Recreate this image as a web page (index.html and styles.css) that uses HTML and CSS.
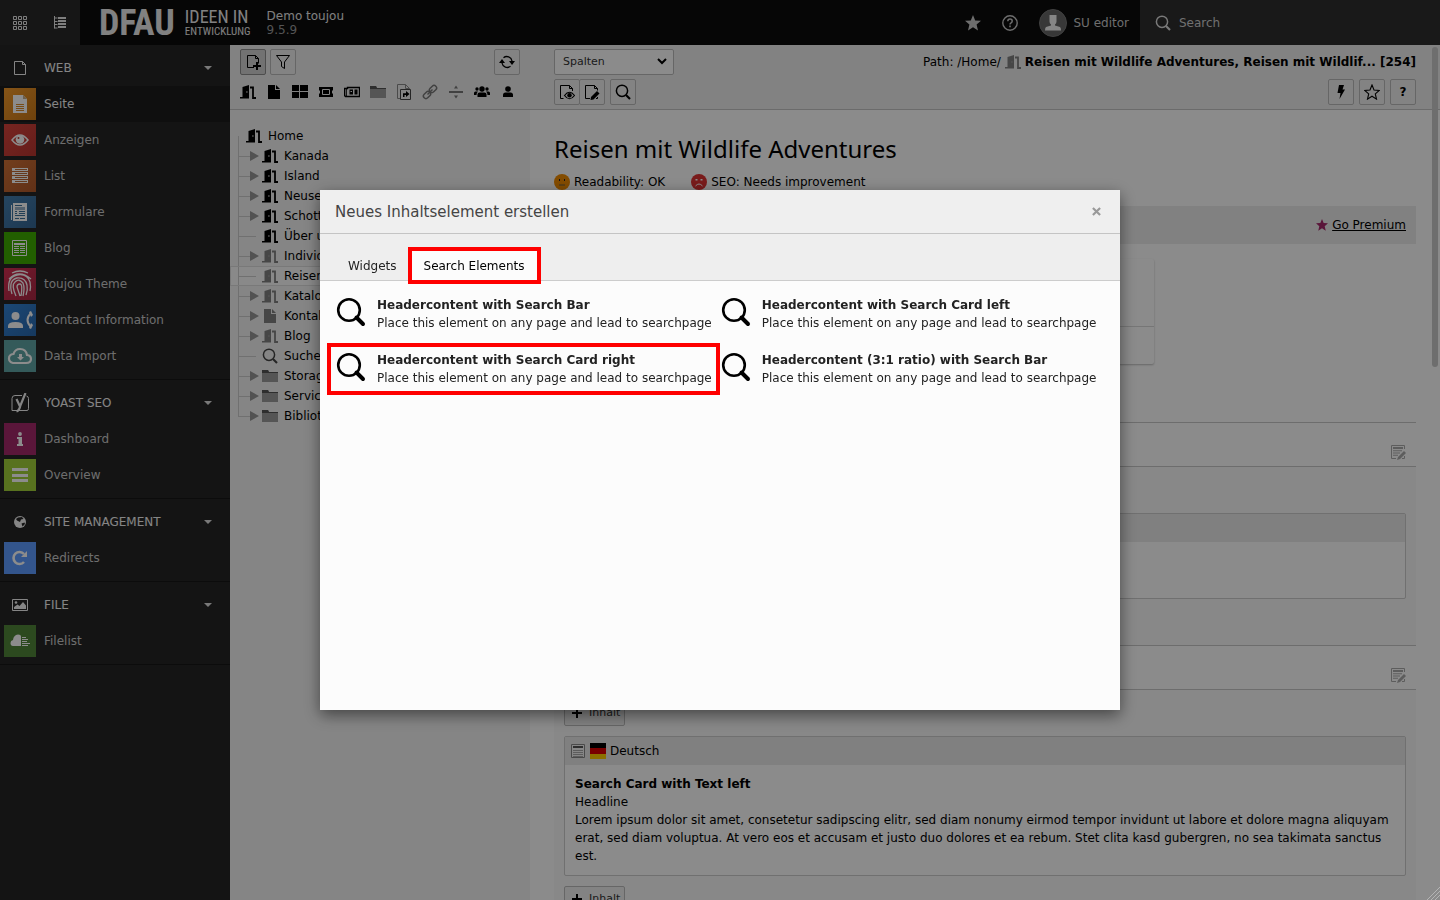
FILE: index.html
```html
<!DOCTYPE html>
<html lang="de">
<head>
    <meta charset="UTF-8">
    <title>Demo toujou</title>
    <link rel="stylesheet" href="styles.css">
</head>
<body>
<svg class="sprite" aria-hidden="true">
    <symbol id="i-door" viewBox="0 0 16 16"><path d="M2.500 3L9 1v13.500H0V13h2.500z"/><path d="M10 3.500h3V14h3" fill="none" stroke="currentColor" stroke-width="1.800"/><path d="M6.300 7h1.200v2H6.300z" fill="#999"/></symbol>
    <symbol id="i-page" viewBox="0 0 16 16"><path d="M2 1h7v5h5v9H2z"/><path d="M10 1l4 4h-4z"/></symbol>
    <symbol id="i-page-o" viewBox="0 0 16 16"><path d="M2.500 1.500h8l3 3v10h-11zM10.500 1.500v3h3" fill="none" stroke="currentColor"/></symbol>
    <symbol id="i-page-new" viewBox="0 0 16 16"><path d="M9 13.500H2.500v-12h8l3 3v5M10.500 1.500v3h3" fill="none" stroke="currentColor"/><path d="M11 8h2v3h3v2h-3v3h-2v-3H8v-2h3z"/></symbol>
    <symbol id="i-filter" viewBox="0 0 16 16"><path d="M1.500 1.500h13L9.500 8v6.500l-3-2V8z" fill="none" stroke="currentColor"/></symbol>
    <symbol id="i-refresh" viewBox="0 0 16 16"><path d="M3 9a5.300 5.300 0 0 0 8.500 3.300M13 7a5.300 5.300 0 0 0-8.500-3.300" fill="none" stroke="currentColor" stroke-width="1.300"/><path d="M0 9l3-4 3 4zM10 7h6l-3 4z"/></symbol>
    <symbol id="i-blocks" viewBox="0 0 16 16"><path d="M0 1h7v6H0zM8 1h8v6H8zM0 8h7v6H0zM8 8h8v6H8z"/></symbol>
    <symbol id="i-ticket" viewBox="0 0 16 16"><path d="M1 3h14v3l-1 1v2l1 1v3H1v-3l1-1V7L1 6z"/><path d="M4.500 5.500h7v5h-7z" fill="none" stroke="#eee"/></symbol>
    <symbol id="i-news" viewBox="0 0 16 16"><path d="M3.500 3.500h12v9H1.500l-1-1v-7h3z" fill="none" stroke="currentColor" stroke-width="1.400"/><path d="M5.500 5.500h3.500v5H5.500zM10.500 5.500h3v5h-3zM1.800 4h1v8h-1z"/><path d="M6.500 7h1.500v1H6.500z" fill="#eee"/></symbol>
    <symbol id="i-folder" viewBox="0 0 16 16"><path d="M0 2h6l1 2h9v10H0z" fill="#9c9c9c"/><path d="M0 2h6l1 2h9v1H0z" fill="#555"/></symbol>
    <symbol id="i-link-page" viewBox="0 0 16 16"><path d="M4 14.500H1.500V.5h8l4 4v1M9.500.5v4h4" fill="none" stroke="#888"/><path d="M4.500 5.500h10v10h-10z" fill="#eee" stroke="#444"/><path d="M10 7l3.500 3-3.500 3v-2H8.500v2H7V9.200h3z"/></symbol>
    <symbol id="i-chain" viewBox="0 0 16 16"><g fill="none" stroke="#777" stroke-width="1.500"><rect x="7" y="2.500" width="8" height="5" rx="2.500" transform="rotate(-45 11 5)"/><rect x="1" y="8.500" width="8" height="5" rx="2.500" transform="rotate(-45 5 11)"/><path d="M5.500 10.500l5-5"/></g></symbol>
    <symbol id="i-divider" viewBox="0 0 16 16"><path d="M1 7h14v2H1zM6 4.500l2-3 2 3zM6 11.500h4l-2 3z" fill="#777"/></symbol>
    <symbol id="i-users" viewBox="0 0 16 16"><circle cx="8" cy="5" r="2.700"/><path d="M3.500 13V10.500q0-2 2-2h5q2 0 2 2V13z"/><circle cx="3" cy="5" r="1.700"/><circle cx="13" cy="5" r="1.700"/><path d="M0 11V9q0-1.500 1.500-1.500H4q-1.500 1-1.500 3.500zM16 11V9q0-1.500-1.500-1.500H12q1.500 1 1.500 3.500z"/></symbol>
    <symbol id="i-user" viewBox="0 0 16 16"><circle cx="8" cy="5" r="2.800"/><path d="M3 13v-2q0-2.500 2.500-2.500h5Q13 8.500 13 11v2z"/></symbol>
    <symbol id="i-search" viewBox="0 0 16 16"><circle cx="7" cy="6.800" r="5.600" fill="none" stroke="currentColor" stroke-width="1.500"/><path d="M11 11l4 4" fill="none" stroke="currentColor" stroke-width="2.200"/></symbol>
    <symbol id="i-search-big" viewBox="0 0 32 32"><circle cx="14" cy="14" r="10.800" fill="none" stroke="currentColor" stroke-width="2.600"/><path d="M21.500 21.500L28 28" fill="none" stroke="currentColor" stroke-width="4" stroke-linecap="round"/></symbol>
    <symbol id="i-page-view" viewBox="0 0 16 16"><path d="M4.500 14.500h-3V1.500h9l3 3v2.500M10.500 1.500v3h3" fill="none" stroke="currentColor"/><path d="M5.500 11.500q5-6.500 10 0-5 6.500-10 0z" fill="none" stroke="currentColor" stroke-width="1.200"/><circle cx="10.500" cy="11.300" r="2.200"/></symbol>
    <symbol id="i-page-edit" viewBox="0 0 16 16"><path d="M6 14.500H1.500V1.500h9l3 3v2M10.500 1.500v3h3M12 14.500h1.500V13" fill="none" stroke="currentColor"/><path d="M13 7l2.500 2.500-6 6L6.500 16l.5-3z"/></symbol>
    <symbol id="i-bolt" viewBox="0 0 16 16"><path d="M6 1h5L9.500 5.500H12L6.500 15l1-6H4.500z"/></symbol>
    <symbol id="i-star" viewBox="0 0 16 16"><path d="M8 0l2.200 5.400 5.800.4-4.400 3.800L13 15.500 8 12.300l-5 3.200 1.400-5.900L0 5.800l5.800-.4z"/></symbol>
    <symbol id="i-star-o" viewBox="0 0 16 16"><path d="M8 1l2 5 5.300.4-4 3.500 1.200 5.200L8 12.200l-4.500 2.900 1.200-5.200-4-3.500L6 6z" fill="none" stroke="currentColor" stroke-width="1.100"/></symbol>
    <symbol id="i-grid" viewBox="0 0 16 16"><path d="M1.500 1.500h3v3h-3zm5 0h3v3h-3zm5 0h3v3h-3zm-10 5h3v3h-3zm5 0h3v3h-3zm5 0h3v3h-3zm-10 5h3v3h-3zm5 0h3v3h-3zm5 0h3v3h-3z" fill="none" stroke="currentColor"/></symbol>
    <symbol id="i-list-tree" viewBox="0 0 16 16"><path d="M2.500 1v12.500M2.500 3h3M2.500 6.500h3M2.500 9.500h3M2.500 13h3" fill="none" stroke="currentColor"/><path d="M6 2h8v2H6zM6 5h8v2H6zM6 8h8v2H6zM6 11h8v2H6z"/></symbol>
    <symbol id="i-help" viewBox="0 0 16 16"><circle cx="8" cy="8" r="7.200" fill="none" stroke="currentColor" stroke-width="1.400"/><path d="M5.800 6.300q0-2.300 2.200-2.300t2.200 2q0 1.200-1.100 1.800Q8 8.400 8 9.500" fill="none" stroke="currentColor" stroke-width="1.500"/><path d="M7.200 10.600h1.600v1.600H7.200z"/></symbol>
    <symbol id="i-avatar" viewBox="0 0 28 28"><circle cx="14" cy="14" r="13.500" fill="#666" stroke="#777"/><path d="M10.500 6h7v6.500q0 2-1.500 3v1l5 1.500q1 .5 1 3.500H6q0-3 1-3.500l5-1.500v-1q-1.500-1-1.500-3z" fill="#f4f4f4"/></symbol>
    <symbol id="i-content-edit" viewBox="0 0 16 16"><path d="M6 14.500H1.500v-13h13V5M14.500 12v2.500H12" fill="none" stroke="currentColor"/><path d="M3 3h10v2H3zM3 6.300h9v1H3zM3 8.500h7v1H3zM3 10.700h5v1H3zM14 7l2 2-6 6-3 1 1-3z"/></symbol>
    <symbol id="i-content" viewBox="0 0 16 16"><path d="M1.500 1.500h13v13h-13z" fill="#f5f5f5" stroke="#888"/><path d="M3 3h10v2H3z" fill="#555"/><path d="M3 7.500h10M3 9.500h10M3 11.500h10M3 13.500h10" stroke="#aaa"/></symbol>
    <symbol id="i-plus" viewBox="0 0 16 16"><path d="M7 3h2v4h4v2H9v4H7V9H3V7h4z"/></symbol>
    <symbol id="i-yoast" viewBox="0 0 20 20"><path d="M12 2.500H5q-3 0-3 3v12h15q1.500 0 1.500-2v-10q0-2-2-2.500" fill="none" stroke="currentColor"/><path d="M6.500 6l3.500 7.500L15.500 0M10.500 12q-1 5.500-4 6.500" fill="none" stroke="currentColor" stroke-width="2.200"/></symbol>
    <symbol id="i-globe" viewBox="0 0 16 16"><circle cx="8" cy="8" r="6"/><path d="M6 3.500l4-.5 1.500 2-2.500.5L8 8 5 6.500 4 5zM9.500 9.500l3-1 .5 1.500-2.500 2.500z" fill="#262626"/></symbol>
    <symbol id="i-image" viewBox="0 0 16 16"><path d="M.5 2.500h15v11H.5z" fill="none" stroke="currentColor"/><path d="M2 12V10l3.500-2.500 2 1.500L11 5l3 3.500V12z"/><circle cx="4" cy="5.500" r="1.300"/></symbol>

    <symbol id="m-page" viewBox="0 0 32 32"><path d="M9 7h10l4 4v14H9z" fill="#fff"/><path d="M19 7v4h4z" fill="#c9b08a"/><path d="M12 16.500h8M12 18.500h8M12 20.500h8M12 22.500h8" stroke="#d98a2b"/></symbol>
    <symbol id="m-view" viewBox="0 0 32 32"><path d="M8 16q8-10 16 0-8 10-16 0z" fill="none" stroke="#fff" stroke-width="1.500"/><circle cx="16" cy="15.500" r="4.300" fill="#fff"/><circle cx="14.500" cy="14" r="1" fill="#bb3a2e"/></symbol>
    <symbol id="m-list" viewBox="0 0 32 32"><path d="M8 8h16v3H8zM8 12h16v3H8zM8 16h16v3H8zM8 20h16v3H8z" fill="#fff"/><path d="M11 9.500h12M11 13.500h12M11 17.500h12M11 21.500h12" stroke="#b86a37"/></symbol>
    <symbol id="m-form" viewBox="0 0 32 32"><path d="M7 9h1v15H7zM9 7h14v18H9z" fill="#fff"/><path d="M11 9h7v1h-7zM15 15h6v1h-6zM11 15h2v1h-2zM15 17h6v1h-6zM11 17h2v1h-2zM11 22h4v1h-4zM16 22h5v1h-5zM11 19h10v1H11z" fill="#3b719c"/><path d="M11 11h10v3H11z" fill="#9ab2c8"/></symbol>
    <symbol id="m-blog" viewBox="0 0 32 32"><path d="M8.500 8.500h14v15h-14z" fill="none" stroke="#fff"/><path d="M10 11h11v2H10zM10 14h5v1h-5zM16 14h5v1h-5zM10 16h5v1h-5zM16 16h5v1h-5zM10 18h5v1h-5zM16 18h5v1h-5zM10 20h5v1h-5zM16 20h5v1h-5z" fill="#fff"/></symbol>
    <symbol id="m-finger" viewBox="0 0 32 32"><g fill="none" stroke="#fff" stroke-width="1.300"><path d="M8 5q8-4 16 0M5 11q10-10 22 0M5 23q-2-14 8-16 10-2 13 7 1 5 0 9M8 26Q4 12 13 10q8-1 10 7 1 5-1 10M12 28Q7 17 11 14q4-4 8 1 2 5 0 13M16 28l-3-9q0-3 3-3t1 12"/></g></symbol>
    <symbol id="m-contact" viewBox="0 0 32 32"><circle cx="11.500" cy="12" r="4" fill="#fff"/><path d="M4 24v-2q0-4 7.500-4t7.500 4v2z" fill="#fff"/><path d="M27 9q-7 7 0 14" fill="none" stroke="#fff" stroke-width="2"/><path d="M25 8l2-1 2 4-2 2zM25 24l2 1 2-4-2-2z" fill="#fff"/></symbol>
    <symbol id="m-cloud" viewBox="0 0 32 32"><path d="M9 23h13q5 0 5-4 0-3.500-4-4-1-6-7-6-5 0-6.500 5Q5 14.500 5 18.500 5 22 9 23z" fill="none" stroke="#fff" stroke-width="2.200"/><path d="M15 14h3v3h2l-3.500 3.500L13 17h2z" fill="#fff"/></symbol>
    <symbol id="m-info" viewBox="0 0 32 32"><circle cx="16" cy="11" r="1.900" fill="#fff"/><path d="M13 14h5v7h1v2h-6v-2h1.500v-5H13z" fill="#fff"/></symbol>
    <symbol id="m-bars" viewBox="0 0 32 32"><path d="M8 9h16v3H8zM8 15h16v3H8zM8 20h16v3H8z" fill="#fff"/></symbol>
    <symbol id="m-redo" viewBox="0 0 32 32"><path d="M20 20a6 6 0 1 1 0-8" fill="none" stroke="#fff" stroke-width="2.600"/><path d="M23 9v6h-6z" fill="#fff"/></symbol>
    <symbol id="m-files" viewBox="0 0 32 32"><path d="M17 21H9q-2.500 0-2.500-3 0-2.500 2.500-3 .5-5 5-5.500 3 0 3 2z" fill="#fff"/><path d="M18 12.500h4M18 14.500h6M18 16.500h5M18 18.500h8M18 20.500h6" stroke="#fff"/></symbol>
</svg>

<header class="topbar">
    <div class="topbar-tools">
        <button type="button" aria-label="Module"><svg class="icon"><use href="#i-grid"/></svg></button>
        <button type="button" aria-label="Seitenbaum"><svg class="icon"><use href="#i-list-tree"/></svg></button>
    </div>
    <a class="logo" href="#">
        <span class="logo-name">DFAU</span>
        <span class="logo-claim"><span>IDEEN IN</span><small>ENTWICKLUNG</small></span>
    </a>
    <div class="site">Demo toujou<span>9.5.9</span></div>
    <div class="topbar-user">
        <button type="button" aria-label="Lesezeichen"><svg class="icon"><use href="#i-star"/></svg></button>
        <button type="button" aria-label="Hilfe"><svg class="icon"><use href="#i-help"/></svg></button>
        <button type="button" class="user"><svg class="avatar"><use href="#i-avatar"/></svg>SU editor</button>
    </div>
    <label class="topbar-search">
        <svg class="icon"><use href="#i-search"/></svg>
        <input type="text" placeholder="Search" aria-label="Search">
    </label>
</header>

<div class="scaffold">
    <nav class="modules">
        <section>
            <button type="button" class="module-head"><svg class="icon"><use href="#i-page-o"/></svg>WEB</button>
            <ul>
                <li class="active"><a href="#"><svg class="module-icon c-page"><use href="#m-page"/></svg>Seite</a></li>
                <li><a href="#"><svg class="module-icon c-view"><use href="#m-view"/></svg>Anzeigen</a></li>
                <li><a href="#"><svg class="module-icon c-list"><use href="#m-list"/></svg>List</a></li>
                <li><a href="#"><svg class="module-icon c-form"><use href="#m-form"/></svg>Formulare</a></li>
                <li><a href="#"><svg class="module-icon c-blog"><use href="#m-blog"/></svg>Blog</a></li>
                <li><a href="#"><svg class="module-icon c-theme"><use href="#m-finger"/></svg>toujou Theme</a></li>
                <li><a href="#"><svg class="module-icon c-contact"><use href="#m-contact"/></svg>Contact Information</a></li>
                <li><a href="#"><svg class="module-icon c-import"><use href="#m-cloud"/></svg>Data Import</a></li>
            </ul>
        </section>
        <section>
            <button type="button" class="module-head"><svg class="icon icon-yoast"><use href="#i-yoast"/></svg>YOAST SEO</button>
            <ul>
                <li><a href="#"><svg class="module-icon c-dash"><use href="#m-info"/></svg>Dashboard</a></li>
                <li><a href="#"><svg class="module-icon c-over"><use href="#m-bars"/></svg>Overview</a></li>
            </ul>
        </section>
        <section>
            <button type="button" class="module-head"><svg class="icon"><use href="#i-globe"/></svg>SITE MANAGEMENT</button>
            <ul>
                <li><a href="#"><svg class="module-icon c-redirect"><use href="#m-redo"/></svg>Redirects</a></li>
            </ul>
        </section>
        <section>
            <button type="button" class="module-head"><svg class="icon"><use href="#i-image"/></svg>FILE</button>
            <ul>
                <li><a href="#"><svg class="module-icon c-file"><use href="#m-files"/></svg>Filelist</a></li>
            </ul>
        </section>
    </nav>

    <aside class="pagetree">
        <div class="docheader tree-header">
            <div class="bar">
                <button type="button" class="btn pressed" aria-label="Neue Seite"><svg class="icon"><use href="#i-page-new"/></svg></button>
                <button type="button" class="btn" aria-label="Filter"><svg class="icon"><use href="#i-filter"/></svg></button>
                <button type="button" class="btn push" aria-label="Aktualisieren"><svg class="icon"><use href="#i-refresh"/></svg></button>
            </div>
            <div class="doktypes">
                <svg class="icon"><use href="#i-door"/></svg>
                <svg class="icon"><use href="#i-page"/></svg>
                <svg class="icon"><use href="#i-blocks"/></svg>
                <svg class="icon"><use href="#i-ticket"/></svg>
                <svg class="icon"><use href="#i-news"/></svg>
                <svg class="icon"><use href="#i-folder"/></svg>
                <svg class="icon"><use href="#i-link-page"/></svg>
                <svg class="icon"><use href="#i-chain"/></svg>
                <svg class="icon"><use href="#i-divider"/></svg>
                <svg class="icon"><use href="#i-users"/></svg>
                <svg class="icon"><use href="#i-user"/></svg>
            </div>
        </div>
        <ul class="tree">
            <li class="root"><svg class="icon"><use href="#i-door"/></svg>Home</li>
            <li><i class="toggle"></i><svg class="icon"><use href="#i-door"/></svg>Kanada</li>
            <li><i class="toggle"></i><svg class="icon"><use href="#i-door"/></svg>Island</li>
            <li><i class="toggle"></i><svg class="icon"><use href="#i-door"/></svg>Neuseeland</li>
            <li><i class="toggle"></i><svg class="icon"><use href="#i-door"/></svg>Schottland</li>
            <li><i class="leaf"></i><svg class="icon"><use href="#i-door"/></svg>Über uns</li>
            <li><i class="toggle"></i><svg class="icon muted"><use href="#i-door"/></svg>Individualreisen</li>
            <li class="selected"><i class="leaf"></i><svg class="icon muted"><use href="#i-door"/></svg>Reisen mit Wildlife Adventures</li>
            <li><i class="toggle"></i><svg class="icon muted"><use href="#i-door"/></svg>Katalog</li>
            <li><i class="toggle"></i><svg class="icon muted"><use href="#i-page"/></svg>Kontakt</li>
            <li><i class="toggle"></i><svg class="icon muted"><use href="#i-door"/></svg>Blog</li>
            <li><i class="leaf"></i><svg class="icon dim"><use href="#i-search"/></svg>Suche</li>
            <li><i class="toggle"></i><svg class="icon"><use href="#i-folder"/></svg>Storage</li>
            <li><i class="toggle"></i><svg class="icon"><use href="#i-folder"/></svg>Service</li>
            <li><i class="toggle"></i><svg class="icon"><use href="#i-folder"/></svg>Bibliothek</li>
        </ul>
    </aside>

    <main class="content">
        <div class="docheader">
            <div class="bar">
                <div class="select">
                    <select aria-label="Ansicht"><option>Spalten</option></select>
                    <svg class="chevron" viewBox="0 0 10 8"><path d="M1 2l4 4 4-4" fill="none" stroke="#000" stroke-width="2"/></svg>
                </div>
                <div class="path push">Path: /Home/ <svg class="icon muted"><use href="#i-door"/></svg> <strong>Reisen mit Wildlife Adventures, Reisen mit Wildlif... [254]</strong></div>
            </div>
            <div class="bar">
                <div class="btn-group">
                    <button type="button" class="btn" aria-label="Ansehen"><svg class="icon"><use href="#i-page-view"/></svg></button>
                    <button type="button" class="btn" aria-label="Bearbeiten"><svg class="icon"><use href="#i-page-edit"/></svg></button>
                </div>
                <button type="button" class="btn" aria-label="Suchen"><svg class="icon"><use href="#i-search"/></svg></button>
                <button type="button" class="btn push" aria-label="Cache leeren"><svg class="icon"><use href="#i-bolt"/></svg></button>
                <button type="button" class="btn" aria-label="Merken"><svg class="icon"><use href="#i-star-o"/></svg></button>
                <button type="button" class="btn help">?</button>
            </div>
        </div>

        <div class="body">
            <h1>Reisen mit Wildlife Adventures</h1>
            <div class="scores">
                <span><svg class="icon" viewBox="0 0 16 16"><circle cx="8" cy="8" r="8" fill="#ee8a00"/><path d="M5 5h1v2H5zM10 5h1v2h-1z" fill="#222"/><path d="M5 10h6v2H5z" fill="#aa7424"/></svg>Readability: OK</span>
                <span><svg class="icon" viewBox="0 0 16 16"><circle cx="8" cy="8" r="8" fill="#dc3232"/><path d="M4.500 5h2v1.500h-2zM9.500 5h2v1.500h-2z" fill="#fff"/><path d="M4.500 12q3.500-4 7 0" fill="none" stroke="#fff"/></svg>SEO: Needs improvement</span>
            </div>
            <div class="premium"><svg><use href="#i-star"/></svg><a href="#">Go Premium</a></div>
            <div class="snippet"><div></div><div></div></div>

            <div class="col-head"><svg class="icon"><use href="#i-content-edit"/></svg></div>
            <div class="col">
                <button type="button" class="btn add"><svg class="icon"><use href="#i-plus"/></svg>Inhalt</button>
                <article class="element">
                    <header></header>
                    <div class="element-body short"></div>
                </article>
                <button type="button" class="btn add"><svg class="icon"><use href="#i-plus"/></svg>Inhalt</button>
            </div>

            <div class="col-head"><svg class="icon"><use href="#i-content-edit"/></svg></div>
            <div class="col">
                <button type="button" class="btn add"><svg class="icon"><use href="#i-plus"/></svg>Inhalt</button>
                <article class="element">
                    <header><svg class="icon"><use href="#i-content"/></svg><span class="flag"></span>Deutsch</header>
                    <div class="element-body">
                        <strong>Search Card with Text left</strong>
                        <p>Headline</p>
                        <p>Lorem ipsum dolor sit amet, consetetur sadipscing elitr, sed diam nonumy eirmod tempor invidunt ut labore et dolore magna aliquyam erat, sed diam voluptua. At vero eos et accusam et justo duo dolores et ea rebum. Stet clita kasd gubergren, no sea takimata sanctus est.</p>
                    </div>
                </article>
                <button type="button" class="btn add"><svg class="icon"><use href="#i-plus"/></svg>Inhalt</button>
            </div>
        </div>
        <div class="scroll-thumb"></div>
    </main>
</div>

<div class="backdrop"></div>
<div class="modal-wrap">
    <div class="modal" role="dialog" aria-labelledby="modal-title">
        <div class="modal-head">
            <h2 id="modal-title">Neues Inhaltselement erstellen</h2>
            <button type="button" class="close" aria-label="Schließen"><svg viewBox="0 0 10 10"><path d="M1 1l8 8M9 1L1 9" stroke="#999" stroke-width="2.400"/></svg></button>
        </div>
        <div class="tabs" role="tablist">
            <button type="button" role="tab">Widgets</button>
            <button type="button" role="tab" class="active marked" aria-selected="true">Search Elements</button>
        </div>
        <div class="wizard">
            <a class="wizard-item" href="#">
                <svg><use href="#i-search-big"/></svg>
                <span><strong>Headercontent with Search Bar</strong>Place this element on any page and lead to searchpage</span>
            </a>
            <a class="wizard-item" href="#">
                <svg><use href="#i-search-big"/></svg>
                <span><strong>Headercontent with Search Card left</strong>Place this element on any page and lead to searchpage</span>
            </a>
            <a class="wizard-item marked" href="#">
                <svg><use href="#i-search-big"/></svg>
                <span><strong>Headercontent with Search Card right</strong>Place this element on any page and lead to searchpage</span>
            </a>
            <a class="wizard-item" href="#">
                <svg><use href="#i-search-big"/></svg>
                <span><strong>Headercontent (3:1 ratio) with Search Bar</strong>Place this element on any page and lead to searchpage</span>
            </a>
        </div>
    </div>
</div>
<svg class="resizer" viewBox="0 0 14 14"><path d="M1 14L14 1M5 14l9-9M9 14l5-5" stroke="#b5b5b5" stroke-width="1"/></svg>
</body>
</html>
```
FILE: styles.css
```css
*{
    box-sizing: border-box;
    padding: 0;
    margin: 0;
}
body{
    display: flex;
    flex-direction: column;
    height: 100vh;
    overflow: hidden;
    font: 12px/18px Verdana, "DejaVu Sans", sans-serif;
    color: #000;
    background-color: #262626;
}
ul{
    list-style-type: none;
}
a{
    color: inherit;
    text-decoration: none;
}
button, input, select{
    font: inherit;
    color: inherit;
    border: 0;
    background: none;
}
button{
    cursor: pointer;
}
svg{
    fill: currentColor;
    flex: none;
}
.sprite{
    position: absolute;
    width: 0;
    height: 0;
}
.icon{
    width: 16px;
    height: 16px;
}
.muted{
    color: #808080;
}
.dim{
    color: #444;
}
.push{
    margin-left: auto;
}

/* topbar */
.topbar{
    display: flex;
    align-items: center;
    flex: none;
    height: 45px;
    color: #e8e8e8;
    background-color: #0b0b0b;
}
.topbar-tools{
    display: flex;
    align-self: stretch;
    background-color: #292929;
}
.topbar-tools button{
    display: flex;
    align-items: center;
    justify-content: center;
    width: 40px;
}
.logo{
    display: flex;
    align-items: center;
    gap: 10px;
    margin-left: 19px;
    color: #ececec;
    font-family: "Liberation Sans Narrow", "Roboto Condensed", Roboto, sans-serif;
}
.logo-name{
    font-size: 36px;
    line-height: 36px;
    font-weight: bold;
}
.logo-claim{
    font-size: 18px;
    line-height: 18px;
}
.logo-claim span, .logo-claim small{
    display: block;
}
.logo-claim small{
    font-size: 11px;
    line-height: 12px;
}
.site{
    margin-left: 16px;
    line-height: 14px;
}
.site span{
    display: block;
    color: #999;
}
.topbar-user{
    display: flex;
    align-items: center;
    gap: 21px;
    margin-left: auto;
    padding-right: 11px;
}
.topbar-user button{
    display: flex;
    align-items: center;
    gap: 6px;
    color: #c8c8c8;
}
.avatar{
    width: 28px;
    height: 28px;
}
.topbar-search{
    display: flex;
    align-items: center;
    gap: 8px;
    align-self: stretch;
    width: 300px;
    padding: 0 15px;
    color: #ddd;
    background-color: #2e2e2e;
}
.topbar-search input::placeholder{
    color: #ccc;
}

.scaffold{
    display: flex;
    flex: 1;
    min-height: 0;
}

/* module menu */
.modules{
    width: 230px;
    flex: none;
    color: #c8c8c8;
}
.modules section{
    padding: 5px 0;
    border-bottom: 1px solid #161616;
}
.module-head, .modules a{
    display: flex;
    align-items: center;
    width: 100%;
    height: 36px;
    padding-left: 4px;
    gap: 8px;
}
.module-head{
    color: #f2f2f2;
}
.module-head .icon{
    margin: 0 8px;
}
.module-head .icon-yoast{
    width: 20px;
    height: 20px;
    margin: 0 6px;
}
.module-head::after{
    content: '';
    margin: 0 18px 0 auto;
    border: 4px solid transparent;
    border-top-color: #ddd;
    border-bottom: 0;
}
.modules .active{
    color: #f2f2f2;
    background-color: #1c1c1c;
}
.module-icon{
    width: 32px;
    height: 32px;
}
.c-page{ background: linear-gradient(135deg, #f39a2b, #c87818); }
.c-view{ background: linear-gradient(135deg, #d8443c, #b93630); }
.c-list{ background: linear-gradient(135deg, #d07236, #b0582a); }
.c-form{ background: linear-gradient(135deg, #447faf, #356693); }
.c-blog{ background: #3fae00; }
.c-theme{ background: linear-gradient(135deg, #d62f52, #a82743); }
.c-contact{ background: linear-gradient(135deg, #3383d6, #2868ac); }
.c-import{ background: #5fa5a4; }
.c-dash{ background: #a4286a; }
.c-over{ background: #a0d03a; }
.c-redirect{ background: #5e9bff; }
.c-file{ background: #50863a; }

/* docheader */
.docheader{
    display: flex;
    flex-direction: column;
    gap: 4px;
    height: 65px;
    padding: 4px 24px;
    background-color: #ededed;
    border-bottom: 1px solid #c3c3c3;
}
.tree-header{
    padding: 4px 10px;
}
.bar{
    display: flex;
    align-items: center;
    gap: 5px;
    height: 26px;
}
.tree-header .bar{
    gap: 4px;
}
.btn{
    display: flex;
    align-items: center;
    justify-content: center;
    width: 26px;
    height: 26px;
    border: 1px solid #bbb;
    border-radius: 2px;
    background-color: #eee;
}
.pressed{
    background-color: #d0d0d0;
    border-color: #8c8c8c;
}
.btn-group{
    display: flex;
}
.btn-group .btn + .btn{
    margin-left: -1px;
}
.help{
    font-weight: bold;
}
.doktypes{
    display: flex;
    align-items: center;
    gap: 10px;
    height: 26px;
}

/* page tree */
.pagetree{
    width: 300px;
    flex: none;
    overflow: hidden;
    background-color: #f3f3f3;
}
.tree{
    padding-top: 16px;
}
.tree li{
    display: flex;
    align-items: center;
    height: 20px;
    padding-left: 8px;
    white-space: nowrap;
    background: linear-gradient(#ccc, #ccc) 8px 0 / 1px 100% no-repeat;
}
.tree li .icon{
    margin-right: 6px;
}
.tree .root{
    padding-left: 16px;
    background-position: 8px 10px;
}
.tree li:last-child{
    background-size: 1px 10px;
}
.tree .selected{
    background-color: #fafafa;
    box-shadow: inset 0 0 0 1px #ddd;
}
.toggle, .leaf{
    display: flex;
    align-items: center;
    width: 24px;
}
.toggle::before, .leaf::before{
    content: '';
    width: 12px;
    height: 1px;
    background-color: #ccc;
}
.leaf::before{
    width: 18px;
}
.toggle::after{
    content: '';
    border: 5px solid transparent;
    border-left: 9px solid #959595;
    border-right: 0;
}

/* content */
.content{
    position: relative;
    flex: 1;
    min-width: 0;
    overflow: hidden;
    background-color: #fdfdfd;
}
.scroll-thumb{
    position: absolute;
    top: 2px;
    right: 2px;
    width: 6px;
    height: 320px;
    border-radius: 3px;
    background-color: #c8c8c8;
}
.select{
    position: relative;
    width: 120px;
}
.select select{
    appearance: none;
    width: 100%;
    height: 26px;
    padding: 0 8px;
    font-size: 11px;
    color: #333;
    border: 1px solid #bbb;
    border-radius: 2px;
    background-color: #fefefe;
}
.chevron{
    position: absolute;
    top: 8px;
    right: 7px;
    width: 10px;
    height: 8px;
    pointer-events: none;
}
.path{
    display: flex;
    align-items: center;
    gap: 4px;
    white-space: nowrap;
}
.body{
    padding: 24px 24px 0;
}
h1{
    font: 24px/30px "Noto Sans", sans-serif;
}
.scores{
    display: flex;
    gap: 26px;
    margin-top: 9px;
}
.scores span{
    display: flex;
    align-items: center;
    gap: 4px;
}
.premium{
    display: flex;
    align-items: center;
    justify-content: flex-end;
    gap: 4px;
    height: 38px;
    margin-top: 15px;
    padding: 0 10px;
    background-color: #ececec;
}
.premium svg{
    width: 12px;
    height: 12px;
    color: #a4286a;
}
.premium a{
    text-decoration: underline;
}
.snippet{
    max-width: 600px;
    margin: 15px 0 58px;
    border-radius: 2px;
    box-shadow: 0 1px 2px #bbb;
}
.snippet div{
    height: 37px;
}
.snippet div:first-child{
    height: 68px;
    border-bottom: 1px solid #d8d8d8;
}
.col-head{
    display: flex;
    justify-content: flex-end;
    align-items: flex-end;
    height: 45px;
    padding: 0 10px 6px;
    color: #aaa;
    border: solid #c6c6c6;
    border-width: 1px 0;
}
.col{
    display: flex;
    flex-direction: column;
    align-items: flex-start;
    gap: 10px;
    padding: 10px;
    background-color: #f7f7f7;
}
.add{
    width: auto;
    gap: 4px;
    padding: 0 4px;
    font-size: 11px;
    color: #333;
}
.add .icon{
    color: #000;
}
.element{
    width: 100%;
    border: 1px solid #ccc;
    border-radius: 2px;
    background-color: #fdfdfd;
}
.element header{
    display: flex;
    align-items: center;
    gap: 4px;
    height: 28px;
    padding: 0 5px;
    background-color: #e9e9e9;
}
.element-body{
    padding: 10px;
}
.short{
    height: 56px;
}
.flag{
    width: 16px;
    height: 16px;
    background: linear-gradient(#000 0 5px, #d00 5px 11px, #fc0 11px);
}

/* modal */
.backdrop{
    position: fixed;
    inset: 0;
    background-color: rgba(0, 0, 0, .45);
}
.modal-wrap{
    position: fixed;
    inset: 0;
    display: flex;
    align-items: center;
    justify-content: center;
}
.modal{
    width: 100%;
    max-width: 800px;
    min-height: 520px;
    color: #222;
    background-color: #fcfcfc;
    box-shadow: 0 5px 15px rgba(0, 0, 0, .5);
}
.modal-head{
    display: flex;
    align-items: center;
    justify-content: space-between;
    height: 44px;
    padding: 0 15px;
    background-color: #efefef;
    border-bottom: 1px solid #c4c4c4;
}
.modal-head h2{
    font-size: 15px;
    font-weight: normal;
    color: #444;
}
.close{
    display: flex;
    padding: 4px;
}
.close svg{
    width: 9px;
    height: 9px;
}
.tabs{
    display: flex;
    align-items: flex-end;
    gap: 3px;
    height: 47px;
    padding: 0 16px;
    background-color: #eee;
    border-bottom: 1px solid #ccc;
}
.tabs button{
    height: 29px;
    padding: 0 12px;
}
.tabs .active{
    color: #000;
    background-color: #fcfcfc;
}
.marked{
    outline: 4px solid #f00;
}
.wizard{
    display: grid;
    grid-template-columns: 1fr 1fr;
    gap: 19px 8px;
    padding: 15px 24px 15px 15px;
}
.wizard-item{
    display: flex;
    gap: 10px;
    white-space: nowrap;
    outline-offset: 4px;
}
.wizard-item svg{
    width: 32px;
    height: 32px;
    color: #000;
}
.wizard-item strong{
    display: block;
}
.resizer{
    position: fixed;
    right: 0;
    bottom: 0;
    width: 14px;
    height: 14px;
}
```
